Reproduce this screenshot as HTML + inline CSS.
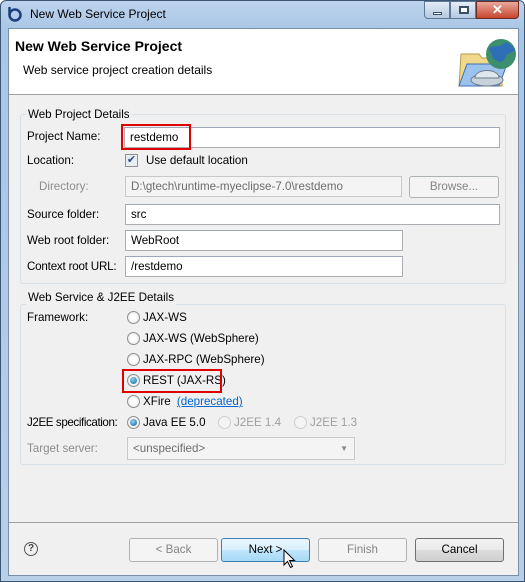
<!DOCTYPE html>
<html><head><style>
*{box-sizing:border-box;margin:0;padding:0}
body{width:525px;height:582px;overflow:hidden;font-family:"Liberation Sans",sans-serif;font-size:11.6px;color:#000;background:#fff}
.win{position:absolute;left:0;top:0;width:525px;height:582px;background:linear-gradient(180deg,#bcd3ec 0,#a9c6e6 30px,#b8cfe8 100%);border:1px solid #3b5674;border-radius:6px 6px 0 0}
.client{position:absolute;left:7px;top:27px;width:511px;height:548px;background:#f0f0f0;border:1px solid #7a8ea8}
.hdr{position:absolute;left:0;top:0;width:509px;height:66px;background:#fff;border-bottom:1px solid #a0a0a0}
.a{position:absolute;white-space:nowrap}
.grp{position:absolute;border:1px solid #d5dfe5;border-radius:3px}
.lg{position:absolute;background:#f0f0f0;padding:0 2px;line-height:14px}
.in{position:absolute;background:#fff;border:1px solid #abadb3;border-top-color:#a0a8b8;height:21px;padding-left:5px;line-height:19px}
.dis{background:#f4f4f4;color:#6d6d6d;border-color:#c8c8c8}
.rb{position:absolute;width:13px;height:13px;border-radius:50%;border:1px solid #8e8f8f;background:radial-gradient(circle,#fff 30%,#dcdcdc 100%)}
.rb.on::after{content:"";position:absolute;left:2px;top:2px;width:7px;height:7px;border-radius:50%;background:radial-gradient(circle at 40% 35%,#8fd3f5,#0a5f9a)}
.rb.d{border-color:#cfcfcf;background:#f4f4f4}
.btn{position:absolute;top:537px;height:24px;width:89px;border:1px solid #707070;border-radius:3px;background:linear-gradient(#f2f2f2 0,#ebebeb 50%,#dddddd 50%,#cfcfcf 100%);text-align:center;line-height:22px}
.btn.d{border-color:#adb2b5;background:#f4f4f4;color:#838383}
.red{position:absolute;border:2px solid #e00000}
</style></head><body>
<div class="win">
<svg class="a" style="left:6px;top:5px" width="16" height="16"><circle cx="8" cy="9" r="5.5" fill="none" stroke="#1d3f7a" stroke-width="2.5"/><path d="M2.5 9V1" stroke="#1d3f7a" stroke-width="2.5"/></svg>
<div class="a" style="left:29px;top:6px;font-size:12px">New Web Service Project</div>
<div class="a" style="left:423px;top:0;width:26px;height:18px;border:1px solid #5e7896;border-radius:0 0 0 4px;background:linear-gradient(#e3ecf7,#b4c8e2)"><div class="a" style="left:8px;top:10px;width:9px;height:3px;background:#fff;border:1px solid #3b4f66"></div></div>
<div class="a" style="left:449px;top:0;width:26px;height:18px;border:1px solid #5e7896;background:linear-gradient(#e3ecf7,#b4c8e2)"><div class="a" style="left:8px;top:4px;width:10px;height:8px;border:2px solid #3b4f66;background:#fff"></div></div>
<div class="a" style="left:475px;top:0;width:43px;height:18px;border:1px solid #6b2b22;border-radius:0 0 4px 0;background:linear-gradient(#e9a99b,#c7452f);color:#fff;font-weight:bold;text-align:center;line-height:16px;font-size:13px">✕</div>
<div class="client">
<div class="hdr">
<div class="a" style="left:6px;top:9px;font-size:14px;font-weight:bold">New Web Service Project</div>
<div class="a" style="left:14px;top:34px;font-size:12px">Web service project creation details</div>
<svg class="a" style="left:440px;top:3px" width="68" height="60"><path d="M12 22h18l3 4h20v28H10z" fill="#f1d98c" stroke="#b59a4f"/><path d="M10 54l8-22h40l-8 22z" fill="#9cc2ee" stroke="#3f6db5"/><circle cx="52" cy="22" r="15" fill="#3c8f6c"/><path d="M40 16c6-4 10 0 14-4s10 2 12 6c-4 4-8 2-10 8s-8 4-12 0z" fill="#2f6fb8"/><ellipse cx="38" cy="48" rx="16" ry="6" fill="#c8d2dc" stroke="#6d7b88"/><path d="M26 46c0-10 24-10 24 0z" fill="#dfe6ec" stroke="#6d7b88"/></svg>
</div>
<div class="grp" style="left:11px;top:85px;width:486px;height:170px"></div>
<div class="lg a" style="left:17px;top:79px">Web Project Details</div>
<div class="a" style="left:18px;top:101px">Project Name:</div>
<div class="in" style="left:115px;top:98px;width:376px">restdemo</div>
<div class="red" style="left:112px;top:95px;width:70px;height:26px"></div>
<div class="a" style="left:18px;top:125px">Location:</div>
<div class="a" style="left:116px;top:125px;width:13px;height:13px;border:1px solid #8e8f8f;background:#e6eef4;color:#2a4f8a;font-size:11px;line-height:11px;text-align:center">✔</div>
<div class="a" style="left:137px;top:125px">Use default location</div>
<div class="a" style="left:30px;top:151px;color:#8d8d8d">Directory:</div>
<div class="in dis" style="left:116px;top:147px;width:277px">D:\gtech\runtime-myeclipse-7.0\restdemo</div>
<div class="btn d" style="left:400px;top:147px;height:22px;width:90px;line-height:20px">Browse...</div>
<div class="a" style="left:18px;top:179px">Source folder:</div>
<div class="in" style="left:116px;top:175px;width:375px">src</div>
<div class="a" style="left:18px;top:205px">Web root folder:</div>
<div class="in" style="left:116px;top:201px;width:278px">WebRoot</div>
<div class="a" style="left:18px;top:231px;letter-spacing:-0.2px">Context root URL:</div>
<div class="in" style="left:116px;top:227px;width:278px">/restdemo</div>

<div class="grp" style="left:11px;top:275px;width:486px;height:161px"></div>
<div class="lg a" style="left:17px;top:262px">Web Service &amp; J2EE Details</div>
<div class="a" style="left:18px;top:282px">Framework:</div>
<div class="rb" style="left:118px;top:282px"></div><div class="a" style="left:134px;top:282px">JAX-WS</div>
<div class="rb" style="left:118px;top:303px"></div><div class="a" style="left:134px;top:303px">JAX-WS (WebSphere)</div>
<div class="rb" style="left:118px;top:324px"></div><div class="a" style="left:134px;top:324px">JAX-RPC (WebSphere)</div>
<div class="rb on" style="left:118px;top:345px"></div><div class="a" style="left:134px;top:345px">REST (JAX-RS)</div>
<div class="red" style="left:113px;top:340px;width:100px;height:24px"></div>
<div class="rb" style="left:118px;top:366px"></div><div class="a" style="left:134px;top:366px">XFire <span style="color:#0066cc;text-decoration:underline;margin-left:3px">(deprecated)</span></div>
<div class="a" style="left:18px;top:387px;letter-spacing:-0.4px">J2EE specification:</div>
<div class="rb on" style="left:118px;top:387px"></div><div class="a" style="left:134px;top:387px">Java EE 5.0</div>
<div class="rb d" style="left:209px;top:387px"></div><div class="a" style="left:225px;top:387px;color:#a0a0a0">J2EE 1.4</div>
<div class="rb d" style="left:285px;top:387px"></div><div class="a" style="left:301px;top:387px;color:#a0a0a0">J2EE 1.3</div>
<div class="a" style="left:18px;top:413px;color:#8d8d8d">Target server:</div>
<div class="in dis" style="left:118px;top:408px;width:228px;height:23px;line-height:21px">&lt;unspecified&gt;<span class="a" style="right:6px;top:0;font-size:8px;color:#888">▼</span></div>

<div class="a" style="left:0;top:493px;width:509px;height:1px;background:#a0a0a0"></div>
<div class="a" style="left:15px;top:513px;width:14px;height:14px;border:1px solid #555;border-radius:50%;text-align:center;font-size:10px;line-height:12px;font-weight:bold;color:#444">?</div>
<div class="btn d" style="left:120px;top:509px">&lt; Back</div>
<div class="btn" style="left:212px;top:509px;border-color:#3c7fb1;background:linear-gradient(#eaf6fd 0,#d9f0fc 50%,#bee6fd 50%,#a7d9f5 100%)">Next &gt;</div>
<svg class="a" style="left:274px;top:520px" width="14" height="20"><path d="M1 1v15l3.5-3.5 3 6 2-1-3-6h5z" fill="#fff" stroke="#000"/></svg>
<div class="btn d" style="left:309px;top:509px">Finish</div>
<div class="btn" style="left:406px;top:509px">Cancel</div>
</div>
</div>
</body></html>
